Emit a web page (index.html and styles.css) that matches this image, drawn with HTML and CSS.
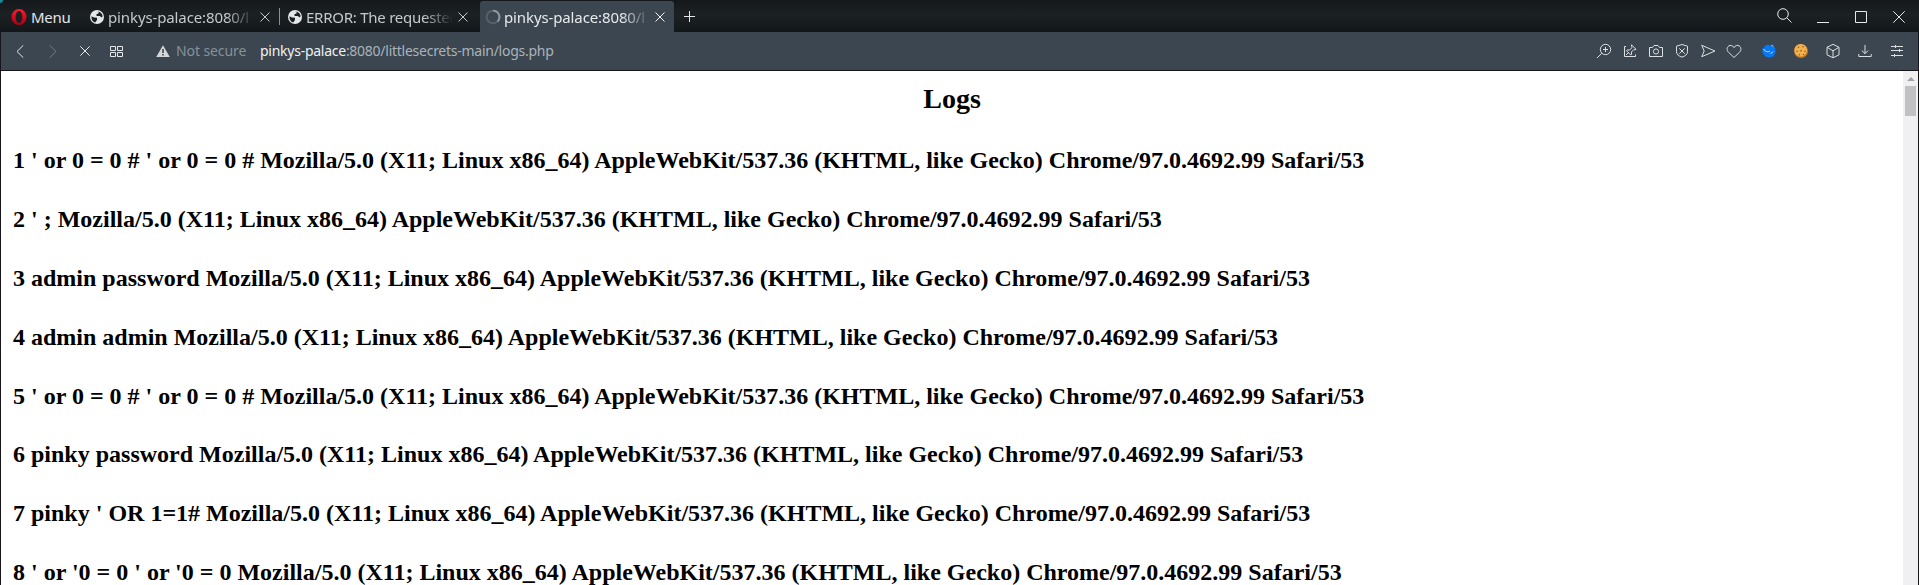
FILE: index.html
```html
<!DOCTYPE html>
<html lang="en">
<head>
<meta charset="utf-8">
<title>Logs</title>
<link rel="stylesheet" href="styles.css">
</head>
<body>
<div class="window">
  <header class="tabbar">
    <div class="menu">
      <svg width="16" height="16" viewBox="0 0 16 16"><defs><linearGradient id="red" x1="0" y1="0" x2="0" y2="1"><stop offset="0" stop-color="#ff1b2d"/><stop offset="1" stop-color="#a70014"/></linearGradient></defs><path fill="url(#red)" fill-rule="evenodd" d="M8 0a7.500 8 0 1 0 0 16a7.500 8 0 1 0 0-16zM8 1.900c2 0 3.300 2.700 3.300 6.100s-1.300 6.100-3.300 6.100s-3.300-2.700-3.300-6.100s1.300-6.100 3.300-6.100z"/></svg>
      <span>Menu</span>
    </div>
    <div class="tab first">
      <svg class="globe" width="14" height="14" viewBox="0 0 14 14"><circle cx="7" cy="7" r="7" fill="#e4e7e9"/><path class="land" d="M1.500 6.200L4 7.500l3 .2v2.300l-1.800 2.500C2.800 11.900 1.200 9.500 1.500 6.200zM6 1.300L8.600 1.500v1.700L6.500 4.200V6h3.600l1 1.500 1.500-1C12.500 4 10.500 1.500 6 1.300z"/></svg>
      <span class="title">pinkys-palace:8080/l</span>
      <svg class="close" width="10" height="10" viewBox="0 0 10 10"><path d="M.5.5l9 9M9.500.5l-9 9"/></svg>
    </div>
    <div class="tab second">
      <svg class="globe" width="14" height="14" viewBox="0 0 14 14"><circle cx="7" cy="7" r="7" fill="#e4e7e9"/><path class="land" d="M1.500 6.200L4 7.500l3 .2v2.300l-1.800 2.500C2.800 11.900 1.200 9.500 1.500 6.200zM6 1.300L8.600 1.500v1.700L6.500 4.200V6h3.600l1 1.500 1.500-1C12.500 4 10.500 1.500 6 1.300z"/></svg>
      <span class="title">ERROR: The requested</span>
      <svg class="close" width="10" height="10" viewBox="0 0 10 10"><path d="M.5.5l9 9M9.500.5l-9 9"/></svg>
    </div>
    <div class="tab active">
      <svg class="spinner" width="16" height="16" viewBox="0 0 16 16"><circle cx="8" cy="8" r="6.300" fill="none" stroke="#56616b" stroke-width="2"/><path d="M8 1.700A6.300 6.300 0 0 1 12.500 12.500" fill="none" stroke="#8e979e" stroke-width="2"/></svg>
      <span class="title">pinkys-palace:8080/l</span>
      <svg class="close" width="10" height="10" viewBox="0 0 10 10"><path d="M.5.5l9 9M9.500.5l-9 9"/></svg>
    </div>
    <svg class="plus" width="11" height="11" viewBox="0 0 11 11"><path d="M5.500 0v11M0 5.500h11"/></svg>
    <div class="controls">
      <svg width="15" height="15" viewBox="0 0 15 15"><circle cx="6" cy="6" r="5.300"/><path d="M9.800 9.800l4.700 4.700"/></svg>
      <svg class="min" width="12" height="12" viewBox="0 0 12 12"><path d="M0 11.500h12"/></svg>
      <svg width="12" height="12" viewBox="0 0 12 12"><path d="M.5.5h11v11H.5z"/></svg>
      <svg width="12" height="12" viewBox="0 0 12 12"><path d="M.3.300l11.400 11.400M11.700.3L.3 11.700"/></svg>
    </div>
  </header>
  <nav class="toolbar">
    <svg class="back" width="8" height="13" viewBox="0 0 8 13"><path d="M7.300.3L1 6.500l6.300 6.200"/></svg>
    <svg class="forward" width="8" height="13" viewBox="0 0 8 13"><path d="M.7.300L7 6.500.7 12.700"/></svg>
    <svg class="stop" width="10" height="10" viewBox="0 0 10 10"><path d="M.3.300l9.400 9.400M9.700.3L.3 9.700"/></svg>
    <svg class="dial" width="13" height="11" viewBox="0 0 13 11"><path d="M.5.5h5v4h-5zM7.500.5h5v4h-5zM.5 6.500h5v4h-5zM7.500 6.500h5v4h-5z"/></svg>
    <svg class="warn" width="14" height="12" viewBox="0 0 14 12"><path class="tri" d="M7 .2L13.800 12H.2z"/><path class="mark" d="M7 4v4M7 9v1.400"/></svg>
    <span class="secure">Not secure</span>
    <span class="url"><b>pinkys-palace</b>:8080/littlesecrets-main/logs.php</span>
    <div class="actions">
      <svg viewBox="0 0 16 16"><circle cx="9.500" cy="6.500" r="5.200"/><path d="M5.800 10.300L1 15M9.500 4v5M7 6.500h5"/></svg>
      <svg viewBox="0 0 16 16"><path d="M4 3.500H2.500v10h11V11.500M9.500 1.800l4.500 4.500-1 .6-1.200-.3-2.400 2.400.2 2.300-.8.800-4.400-4.400.8-.8 2.300.2 2.400-2.400-.3-1.200zM6.500 9.500L4 12"/></svg>
      <svg viewBox="0 0 16 16"><path d="M1.500 4.500h3l1.500-2h4l1.500 2h3v9h-13z"/><circle cx="8" cy="8.500" r="2.600"/></svg>
      <svg viewBox="0 0 16 16"><path d="M8 1.500l5.500 1.700v5.500c0 2.500-2 4.300-5.500 5.500c-3.500-1.200-5.500-3-5.500-5.500V3.200zM5.300 5.300l5.400 5.400M10.700 5.300l-5.400 5.400"/></svg>
      <svg viewBox="0 0 16 16"><path d="M1.700 2.300L15 8 1.700 13.700 4.200 8z"/></svg>
      <svg viewBox="0 0 16 16"><path d="M8 14.500L2.400 9.200C.3 7 1 4.200 2.500 3.100C4.400 1.700 6.800 2.300 8 4.700c1.200-2.400 3.600-3 5.500-1.600c1.500 1.100 2.200 3.900.1 6.100z"/></svg>
    </div>
    <div class="extensions">
      <svg class="fill" viewBox="0 0 16 16"><path fill="#0877f5" d="M1.500 4.500l1.200 1 1-2.500L7 1.500l2 1.200 3-1.400.5 2 1.700 1.700.4 4.500-2.300 4-4.300 1.300-3.500-1.200L1.800 10.500l-.5-3z"/><path fill="none" stroke="#c9e5ff" stroke-width="1" d="M2.500 6c1.500 2.500 4.500 3.500 6.500 2M10.500 2l1.500 1.500M12 8.500c-.5 1-1.500 1.800-2.500 2"/></svg>
      <svg class="fill" viewBox="0 0 16 16"><circle cx="8" cy="8" r="7" fill="#c8771d"/><circle cx="7.700" cy="7.300" r="6.300" fill="#f0b050"/><g fill="#8a5218"><circle cx="5.500" cy="4.300" r=".7"/><circle cx="10" cy="3.700" r=".7"/><circle cx="8" cy="7.700" r=".8"/><circle cx="4" cy="8.200" r=".7"/><circle cx="12" cy="8.200" r=".7"/><circle cx="6.500" cy="11.700" r=".7"/><circle cx="10.500" cy="11.500" r=".7"/></g></svg>
      <svg viewBox="0 0 16 16"><path d="M8 1.300l6 3v7.500l-6 3-6-3V4.300zM2 4.300L8 7.800l6-3.500M8 7.800v7"/></svg>
      <svg viewBox="0 0 16 16"><path d="M8 2v8.500M4.800 7.500L8 10.700l3.200-3.200M1.800 11v2.500h12.400v-2.500"/></svg>
      <svg viewBox="0 0 16 16"><path d="M2 3.500h12M2 7.500h12M2 12.500h12M6.500 2v3M10.500 6v3M5.500 11v3"/></svg>
    </div>
  </nav>
  <div class="viewport">
    <main class="page">
      <h1>Logs</h1>
      <p>1 ' or 0 = 0 # ' or 0 = 0 # Mozilla/5.0 (X11; Linux x86_64) AppleWebKit/537.36 (KHTML, like Gecko) Chrome/97.0.4692.99 Safari/53</p>
      <p>2 ' ; Mozilla/5.0 (X11; Linux x86_64) AppleWebKit/537.36 (KHTML, like Gecko) Chrome/97.0.4692.99 Safari/53</p>
      <p>3 admin password Mozilla/5.0 (X11; Linux x86_64) AppleWebKit/537.36 (KHTML, like Gecko) Chrome/97.0.4692.99 Safari/53</p>
      <p>4 admin admin Mozilla/5.0 (X11; Linux x86_64) AppleWebKit/537.36 (KHTML, like Gecko) Chrome/97.0.4692.99 Safari/53</p>
      <p>5 ' or 0 = 0 # ' or 0 = 0 # Mozilla/5.0 (X11; Linux x86_64) AppleWebKit/537.36 (KHTML, like Gecko) Chrome/97.0.4692.99 Safari/53</p>
      <p>6 pinky password Mozilla/5.0 (X11; Linux x86_64) AppleWebKit/537.36 (KHTML, like Gecko) Chrome/97.0.4692.99 Safari/53</p>
      <p>7 pinky ' OR 1=1# Mozilla/5.0 (X11; Linux x86_64) AppleWebKit/537.36 (KHTML, like Gecko) Chrome/97.0.4692.99 Safari/53</p>
      <p>8 ' or '0 = 0 ' or '0 = 0 Mozilla/5.0 (X11; Linux x86_64) AppleWebKit/537.36 (KHTML, like Gecko) Chrome/97.0.4692.99 Safari/53</p>
    </main>
    <aside class="scrollbar"><i class="up"></i><i class="thumb"></i></aside>
  </div>
</div>
</body>
</html>
```
FILE: styles.css
```css
body { margin: 0; overflow: hidden; background: #14171a; }
svg { display: block; flex: none; fill: none; stroke: #e4e8ea; }
.window {
  box-sizing: border-box; width: 1919px; height: 585px; overflow: hidden;
  display: flex; flex-direction: column; background: #17141b;
  font: 15px/20px "Noto Sans", sans-serif; letter-spacing: -.12px;
}
.tabbar {
  box-sizing: border-box; height: 32px; flex: none; display: flex; align-items: stretch;
  padding-top: 1px;
  background: radial-gradient(circle at 0 0, #1a8f9c 2px, transparent 4px), linear-gradient(#15181b, #1c2124 45%, #13171a);
}
.menu { width: 79px; padding-left: 11px; display: flex; align-items: center; gap: 4px; color: #e2e4e6; letter-spacing: -.25px; }
.menu svg { stroke: none; }
.tab { box-sizing: border-box; display: flex; flex: none; align-items: center; white-space: nowrap; color: #c5c9cc; }
.title {
  width: 147px; flex: none; margin-left: 4px;
  -webkit-mask-image: linear-gradient(90deg, #000 80%, transparent);
  mask-image: linear-gradient(90deg, #000 80%, transparent);
}
.close { margin-left: 5px; stroke: #c5c9cc; }
.globe { stroke: none; }
.land { fill: #1a1e21; }
.first { width: 189px; }
.second { width: 201px; padding-left: 8px; letter-spacing: -.25px; }
.second::before { content: ""; width: 1px; height: 17px; margin: 0 8px 0 -8px; background: #8294a0; }
.active { width: 194px; padding-left: 5px; border-radius: 3px 3px 0 0; background: #3b4650; color: #e6e9eb; }
.active .title { margin-left: 3px; }
.active .close { stroke: #f1f3f4; margin-left: 4px; }
.spinner { stroke: none; }
.plus { align-self: center; margin-left: 10px; }
.controls { margin-left: auto; padding-right: 14px; display: flex; align-items: center; gap: 26px; }
.controls svg:first-child { margin: -2px -1px 0 0; }
.toolbar {
  height: 38px; flex: none; display: flex; align-items: center; margin: 0 1px;
  background: #3b4650; box-sizing: border-box;
}
.back { margin-left: 15px; }
.forward { margin-left: 25px; stroke: #737e87; }
.stop { margin-left: 23px; }
.dial { margin-left: 20px; }
.warn { margin-left: 33px; stroke: none; }
.tri { fill: #d3d7da; }
.mark { stroke: #3b4650; stroke-width: 1.6; }
.secure { width: 84px; margin-left: 6px; color: #86919a; font-size: 14px; letter-spacing: -.1px; }
.url { font-size: 14px; color: #aab3ba; letter-spacing: -.26px; }
.url b { font-weight: 400; color: #eff1f2; }
.actions { margin-left: auto; display: flex; gap: 10px; }
.actions svg, .extensions svg { width: 16px; height: 16px; stroke: #dce0e3; }
.extensions { display: flex; gap: 16px; margin: 0 13px 0 19px; }
.extensions .fill { stroke: none; }
.viewport { flex: 1; min-height: 0; margin: 1px 1px 0; display: flex; background: #fff; }
.page { flex: 1; min-width: 0; overflow: hidden; padding: 12px 12px 0; color: #000; font-family: "Liberation Serif", serif; letter-spacing: 0; white-space: nowrap; }
.page h1 { margin: 0 0 32px; text-align: center; font-size: 28px; line-height: 32px; }
.page p { margin: 0 0 31.900px; font-size: 24px; line-height: 27px; font-weight: 700; }
.scrollbar { width: 15px; background: #f0f0f0; display: flex; flex-direction: column; align-items: center; }
.up { border: 4px solid transparent; border-top: 0; border-bottom-color: #a3a3a3; margin: 6px 0 5px; }
.thumb { width: 11px; height: 30px; background: #c1c1c1; }
```
